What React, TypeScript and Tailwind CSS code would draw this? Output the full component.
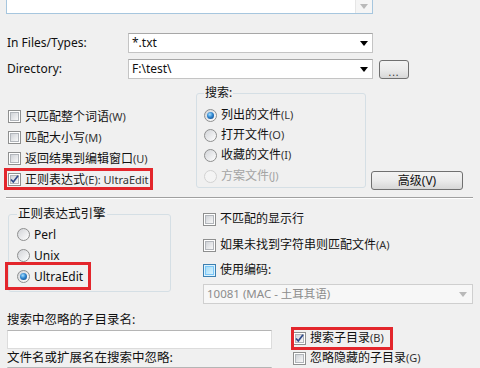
import React from 'react';

const font = "font-['Noto_Sans','Noto_Sans_CJK_SC',sans-serif]";

const CheckBox = ({ checked = false, hot = false }: { checked?: boolean; hot?: boolean }) => (
  <span
    className={`relative w-[13px] h-[13px] shrink-0 border flex items-center justify-center ${
      hot ? 'border-[#3c7fb1] bg-[#def3fc]' : 'border-[#8e8f8f] bg-white'
    }`}
  >
    <span
      className={`w-[9px] h-[9px] border ${
        hot
          ? 'border-[#79c6f9] bg-gradient-to-br from-[#a6dcf7] to-[#d8f1fd]'
          : 'border-[#b2b6bb] bg-gradient-to-br from-[#d0d3d8] to-[#f8f8f8]'
      }`}
    />
    {checked && (
      <svg className="absolute inset-0" width="11" height="11" viewBox="0 0 11 11">
        <path d="M2 5.5 L4.3 8 L9 1.8" fill="none" stroke="#2f4a8a" strokeWidth="1.7" />
      </svg>
    )}
  </span>
);

const Radio = ({ checked = false, disabled = false }: { checked?: boolean; disabled?: boolean }) => (
  <span
    className={`w-[13px] h-[13px] shrink-0 rounded-full border flex items-center justify-center ${
      disabled ? 'border-[#d2d2d2] bg-[#f4f4f4]' : 'border-[#8e8f8f] bg-gradient-to-br from-[#d2d4d8] to-white'
    }`}
  >
    {checked && (
      <span className="w-[7px] h-[7px] rounded-full bg-[radial-gradient(circle_at_40%_35%,#a8e0ff_0%,#2f86d0_45%,#0d3d78_100%)]" />
    )}
  </span>
);

const Hint = ({ children }: { children: React.ReactNode }) => (
  <span className="text-[11px] text-[#333]">{children}</span>
);

const Arrow = ({ light = false }: { light?: boolean }) => (
  <svg width="8" height="5" viewBox="0 0 8 5">
    <path d="M0 0 H8 L4 5 Z" fill={light ? '#b9b9b9' : '#000'} />
  </svg>
);

const Combo = ({ value, w }: { value: string; w: string }) => (
  <div className={`${w} h-[20px] bg-white border border-[#c4c4c4] border-t-[#a7a7a7] flex items-center justify-between pl-[3px] pr-[4px]`}>
    <span className="text-[12px] leading-none">{value}</span>
    <Arrow />
  </div>
);

const Btn = ({ children, w }: { children: React.ReactNode; w: string }) => (
  <div
    className={`${w} h-[19px] rounded-[3px] border border-[#707070] bg-gradient-to-b from-[#f3f3f3] via-[#ebebeb] to-[#d7d7d7] flex items-center justify-center text-[12px] leading-none`}
  >
    {children}
  </div>
);

const Row = ({ children, h = 'h-[21px]' }: { children: React.ReactNode; h?: string }) => (
  <div className={`${h} flex items-center gap-[4px] text-[12px] leading-none whitespace-nowrap`}>{children}</div>
);

export default function App() {
  return (
    <div className={`w-[480px] h-[368px] bg-[#f0f0f0] overflow-hidden flex flex-col text-[#111] ${font}`}>
      {/* find text area (cut off) */}
      <div className="ml-[6px] w-[367px] h-[14px] shrink-0 bg-white border-x border-b border-[#a6c6de] flex justify-end">
        <div className="w-[17px] h-full bg-[#f5f5f5] border-l border-[#e6e6e6] flex items-center justify-center">
          <Arrow light />
        </div>
      </div>

      <div className="mt-[19px] h-[20px] shrink-0 flex items-center">
        <span className="w-[128px] pl-[7px] text-[12px]">In Files/Types:</span>
        <Combo value="*.txt" w="w-[245px]" />
      </div>

      <div className="mt-[6px] h-[20px] shrink-0 flex items-center">
        <span className="w-[128px] pl-[7px] text-[12px]">Directory:</span>
        <Combo value="F:\test\" w="w-[245px]" />
        <div className="ml-[6px] mt-[1px]">
          <Btn w="w-[30px]">
            <span className="text-[10px] tracking-[1px] text-[#333] mt-[4px]">...</span>
          </Btn>
        </div>
      </div>

      {/* options */}
      <div className="h-[118px] shrink-0 flex">
        <div className="w-[196px] pl-[8px] pt-[27px] flex flex-col">
          <Row>
            <CheckBox />
            <span>只匹配整个词语<Hint>(W)</Hint></span>
          </Row>
          <Row>
            <CheckBox />
            <span>匹配大小写<Hint>(M)</Hint></span>
          </Row>
          <Row>
            <CheckBox />
            <span>返回结果到编辑窗口<Hint>(U)</Hint></span>
          </Row>
          <div className="relative">
            <Row>
              <CheckBox checked />
              <span>正则表达式<Hint>(E): UltraEdit</Hint></span>
            </Row>
            <span className="absolute left-[-4px] top-[-1px] w-[149px] h-[22px] border-[3px] border-[#e3262c]" />
          </div>
        </div>

        <div className="relative mt-[14px] w-[170px] h-[95px] border border-[#d5dfe5] rounded-[3px] pl-[7px] pt-[11px] flex flex-col">
          <span className="absolute left-[7px] top-[-9px] bg-[#f0f0f0] px-px text-[12px] leading-[16px]">搜索:</span>
          <Row h="h-[20px]">
            <Radio checked />
            <span>列出的文件<Hint>(L)</Hint></span>
          </Row>
          <Row h="h-[20px]">
            <Radio />
            <span>打开文件<Hint>(O)</Hint></span>
          </Row>
          <Row h="h-[20px]">
            <Radio />
            <span>收藏的文件<Hint>(I)</Hint></span>
          </Row>
          <Row h="h-[22px]">
            <Radio disabled />
            <span className="text-[#a3a3a3]">方案文件<span className="text-[11px]">(J)</span></span>
          </Row>
        </div>

        <div className="ml-[5px] self-end mb-[7px]">
          <Btn w="w-[92px]">高级(V)</Btn>
        </div>
      </div>

      <div className="ml-[6px] w-[467px] h-[2px] shrink-0 border-t border-[#a0a0a0] border-b border-b-white" />

      {/* engine + extra options */}
      <div className="h-[106px] shrink-0 flex">
        <div className="relative ml-[8px] mt-[15px] w-[163px] h-[78px] border border-[#d5dfe5] rounded-[3px] pl-[8px] pt-[9px] flex flex-col">
          <span className="absolute left-[8px] top-[-9px] bg-[#f0f0f0] px-px text-[12.5px] leading-[16px]">正则表达式引擎</span>
          <Row>
            <Radio />
            <span>Perl</span>
          </Row>
          <Row>
            <Radio />
            <span>Unix</span>
          </Row>
          <div className="relative">
            <Row>
              <Radio checked />
              <span>UltraEdit</span>
            </Row>
            <span className="absolute left-[-12px] top-[-4px] w-[86px] h-[28px] border-[3px] border-[#e3262c]" />
          </div>
        </div>

        <div className="ml-[32px] w-[270px] pt-[10px] flex flex-col">
          <Row h="h-[20px]">
            <CheckBox />
            <span>不匹配的显示行</span>
          </Row>
          <div className="mt-[6px]">
            <Row h="h-[20px]">
              <CheckBox />
              <span>如果未找到字符串则匹配文件<Hint>(A)</Hint></span>
            </Row>
          </div>
          <div className="mt-[5px]">
            <Row h="h-[20px]">
              <CheckBox hot />
              <span>使用编码:</span>
            </Row>
          </div>
          <div className="mt-[4px] h-[20px] bg-[#f7f7f7] border border-[#cfcfcf] flex items-center justify-between pl-[3px] pr-[5px]">
            <span className="text-[11.5px] leading-none text-[#8c8c8c]">10081 (MAC - 土耳其语)</span>
            <Arrow light />
          </div>
        </div>
      </div>

      {/* ignore lists */}
      <div className="flex flex-1">
        <div className="ml-[7px] w-[265px] pt-[7px] flex flex-col">
          <span className="h-[16px] text-[12.5px] leading-[16px]">搜索中忽略的子目录名:</span>
          <div className="mt-[2px] h-[19px] bg-white border border-[#dcdcdc] border-t-[#b5b5b5]" />
          <span className="mt-px h-[16px] text-[12.5px] leading-[16px]">文件名或扩展名在搜索中忽略:</span>
          <div className="mt-px h-[19px] bg-white border border-[#dcdcdc] border-t-[#b5b5b5]" />
        </div>
        <div className="ml-[21px] pt-[23px] flex flex-col">
          <div className="relative">
            <Row h="h-[20px]">
              <CheckBox checked />
              <span>搜索子目录<Hint>(B)</Hint></span>
            </Row>
            <span className="absolute left-[-2px] top-[-1px] w-[102px] h-[23px] border-[3px] border-[#e3262c]" />
          </div>
          <Row h="h-[20px]">
            <CheckBox />
            <span>忽略隐藏的子目录<Hint>(G)</Hint></span>
          </Row>
        </div>
      </div>
    </div>
  );
}
